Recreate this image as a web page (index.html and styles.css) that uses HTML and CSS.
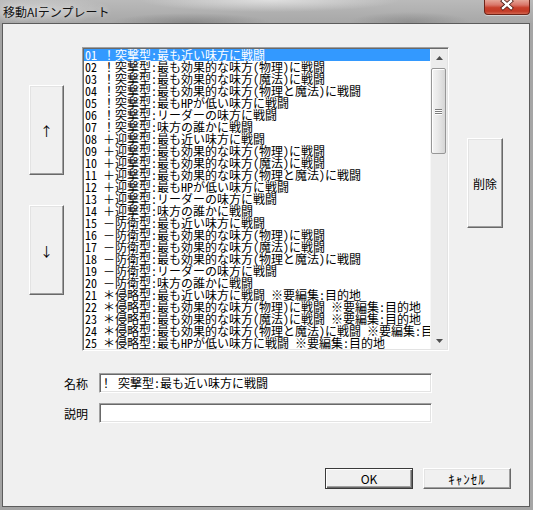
FILE: index.html
```html
<!DOCTYPE html>
<html lang="ja">
<head>
<meta charset="utf-8">
<title>移動AIテンプレート</title>
<link rel="stylesheet" href="styles.css">
</head>
<body>
<div class="window">
  <div class="titlebar">
    <span class="title">移動AIテンプレート</span>
    <div class="close">
      <svg width="46" height="15" viewBox="0 0 46 15">
        <path d="M19 2 L27 9 M27 2 L19 9" stroke="#4a1a12" stroke-width="4" stroke-linecap="square"/>
        <path d="M19 2 L27 9 M27 2 L19 9" stroke="#ffffff" stroke-width="2.4" stroke-linecap="square"/>
      </svg>
    </div>
  </div>
  <div class="client">
    <div class="top">
      <div class="move-col">
        <div class="btn move">↑</div>
        <div class="btn move">↓</div>
      </div>
      <div class="listbox">
        <div class="items">
          <div class="row sel">01 ！突撃型:最も近い味方に戦闘</div>
          <div class="row">02 ！突撃型:最も効果的な味方(物理)に戦闘</div>
          <div class="row">03 ！突撃型:最も効果的な味方(魔法)に戦闘</div>
          <div class="row">04 ！突撃型:最も効果的な味方(物理と魔法)に戦闘</div>
          <div class="row">05 ！突撃型:最もHPが低い味方に戦闘</div>
          <div class="row">06 ！突撃型:リーダーの味方に戦闘</div>
          <div class="row">07 ！突撃型:味方の誰かに戦闘</div>
          <div class="row">08 ＋迎撃型:最も近い味方に戦闘</div>
          <div class="row">09 ＋迎撃型:最も効果的な味方(物理)に戦闘</div>
          <div class="row">10 ＋迎撃型:最も効果的な味方(魔法)に戦闘</div>
          <div class="row">11 ＋迎撃型:最も効果的な味方(物理と魔法)に戦闘</div>
          <div class="row">12 ＋迎撃型:最もHPが低い味方に戦闘</div>
          <div class="row">13 ＋迎撃型:リーダーの味方に戦闘</div>
          <div class="row">14 ＋迎撃型:味方の誰かに戦闘</div>
          <div class="row">15 －防衛型:最も近い味方に戦闘</div>
          <div class="row">16 －防衛型:最も効果的な味方(物理)に戦闘</div>
          <div class="row">17 －防衛型:最も効果的な味方(魔法)に戦闘</div>
          <div class="row">18 －防衛型:最も効果的な味方(物理と魔法)に戦闘</div>
          <div class="row">19 －防衛型:リーダーの味方に戦闘</div>
          <div class="row">20 －防衛型:味方の誰かに戦闘</div>
          <div class="row">21 ＊侵略型:最も近い味方に戦闘 ※要編集:目的地</div>
          <div class="row">22 ＊侵略型:最も効果的な味方(物理)に戦闘 ※要編集:目的地</div>
          <div class="row">23 ＊侵略型:最も効果的な味方(魔法)に戦闘 ※要編集:目的地</div>
          <div class="row">24 ＊侵略型:最も効果的な味方(物理と魔法)に戦闘 ※要編集:目的地</div>
          <div class="row">25 ＊侵略型:最もHPが低い味方に戦闘 ※要編集:目的地</div>
        </div>
        <div class="scrollbar">
          <div class="sb-btn">
            <svg width="7" height="4" viewBox="0 0 7 4"><polygon points="0,4 3.5,0 7,4" fill="#4f4f4f"/></svg>
          </div>
          <div class="sb-track">
            <div class="thumb"><span class="grip"></span><span class="grip"></span><span class="grip"></span></div>
          </div>
          <div class="sb-btn">
            <svg width="7" height="4" viewBox="0 0 7 4"><polygon points="0,0 7,0 3.5,4" fill="#4f4f4f"/></svg>
          </div>
        </div>
      </div>
      <div class="btn delete">削除</div>
    </div>
    <div class="form">
      <div class="field"><span class="label">名称</span><div class="edit">！ 突撃型:最も近い味方に戦闘</div></div>
      <div class="field"><span class="label">説明</span><div class="edit"></div></div>
    </div>
    <div class="footer">
      <div class="btn default">OK</div>
      <div class="btn cancel">ｷｬﾝｾﾙ</div>
    </div>
  </div>
</div>
</body>
</html>
```
FILE: styles.css
```css
* { box-sizing: border-box; }
html, body { margin: 0; padding: 0; }
body {
  width: 533px;
  height: 510px;
  overflow: hidden;
  font-family: "Noto Sans CJK JP", sans-serif;
  font-size: 12px;
  color: #000;
}
.window {
  width: 533px;
  height: 510px;
  display: flex;
  flex-direction: column;
  background: linear-gradient(90deg, #a3a3a3, #ababab 50%, #a5a5a5);
}
.titlebar {
  height: 23px;
  flex: none;
  display: flex;
  justify-content: space-between;
  align-items: flex-start;
  padding: 0 3px 0 3px;
  background:
    radial-gradient(ellipse 130px 12px at 270px 0px, rgba(235,235,235,.75), rgba(235,235,235,0)),
    radial-gradient(ellipse 80px 10px at 190px 23px, rgba(80,80,80,.35), rgba(80,80,80,0)),
    radial-gradient(ellipse 60px 10px at 410px 22px, rgba(90,90,90,.3), rgba(90,90,90,0)),
    radial-gradient(ellipse 70px 14px at 40px 10px, rgba(230,230,230,.5), rgba(230,230,230,0)),
    linear-gradient(180deg, #bababa, #a7a7a7);
}
.title {
  line-height: 23px;
  font-size: 12px;
  color: #111;
  text-shadow: 0 0 6px rgba(255,255,255,.7);
}
.close {
  width: 46px;
  height: 15px;
  border: 1px solid #6e2418;
  border-top: none;
  border-radius: 0 0 4px 4px;
  background: linear-gradient(180deg, #e6a597 0%, #d9776a 35%, #c8402c 55%, #c23b26 80%, #d2654f 100%);
  box-shadow: 0 1px 0 rgba(255,255,255,.45);
  overflow: hidden;
}
.close svg { display: block; margin: -1px 0 0 -1px; }
.client {
  flex: 1;
  margin: 0 3px 3px 2px;
  border: 1px solid #5c5c5c;
  background: #f0f0f0;
  display: flex;
  flex-direction: column;
}
.top {
  display: flex;
  align-items: flex-start;
  margin-top: 23px;
}
.move-col {
  width: 35px;
  margin: 38px 0 0 26px;
  display: flex;
  flex-direction: column;
  gap: 30px;
}
.btn {
  background: #f0f0f0;
  border: 1px solid;
  border-color: #ffffff #696969 #696969 #ffffff;
  box-shadow: inset -1px -1px 0 #a0a0a0, inset 1px 1px 0 #e3e3e3;
  display: flex;
  align-items: center;
  justify-content: center;
  font-size: 12px;
  color: #000;
}
.btn.move { height: 90px; font-size: 13px; }
.btn.delete {
  width: 36px;
  height: 90px;
  margin: 91px 0 0 18px;
}
.listbox {
  width: 367px;
  height: 304px;
  margin-left: 18px;
  display: flex;
  border: 1px solid;
  border-color: #a0a0a0 #ffffff #ffffff #a0a0a0;
  box-shadow: inset 1px 1px 0 #696969, inset -1px -1px 0 #e3e3e3;
  padding: 1px;
  background: #fff;
}
.items {
  flex: 1;
  overflow: hidden;
  font-family: "Noto Sans Mono CJK JP", "Noto Sans CJK JP", monospace;
  font-size: 12px;
  line-height: 12px;
}
.row {
  height: 12px;
  white-space: pre;
  padding-left: 1px;
}
.row.sel { background: #3399ff; color: #fff; }
.scrollbar {
  width: 17px;
  flex: none;
  display: flex;
  flex-direction: column;
  background: #ececec;
  border-left: 1px solid #f7f7f7;
}
.sb-btn {
  height: 17px;
  flex: none;
  display: flex;
  align-items: center;
  justify-content: center;
}
.sb-track {
  flex: 1;
  padding-top: 2px;
}
.thumb {
  width: 15px;
  height: 86px;
  border: 1px solid #979797;
  border-radius: 2px;
  background: linear-gradient(90deg, #f4f4f4 0%, #e9e9e9 45%, #d6d6d6 100%);
  box-shadow: inset 1px 1px 0 #ffffff;
  display: flex;
  flex-direction: column;
  align-items: center;
  justify-content: center;
  gap: 1px;
}
.grip {
  width: 7px;
  height: 1px;
  background: #7c7c7c;
  box-shadow: 0 1px 0 #ffffff;
}
.form {
  margin: 22px 0 0 61px;
  display: flex;
  flex-direction: column;
  gap: 10px;
}
.field {
  display: flex;
  align-items: center;
  gap: 11px;
  height: 20px;
}
.label {
  width: 24px;
  font-size: 12px;
  white-space: nowrap;
}
.edit {
  width: 333px;
  height: 20px;
  background: #fff;
  border: 1px solid;
  border-color: #a0a0a0 #ffffff #ffffff #a0a0a0;
  box-shadow: inset 1px 1px 0 #696969, inset -1px -1px 0 #e3e3e3;
  font-family: "Noto Sans Mono CJK JP", "Noto Sans CJK JP", monospace;
  font-size: 12px;
  line-height: 18px;
  white-space: pre;
  padding-left: 0;
  overflow: hidden;
}
.footer {
  margin: 45px 18px 0 0;
  display: flex;
  justify-content: flex-end;
  gap: 10px;
}
.footer .btn { width: 88px; height: 21px; }
.btn.default {
  border: 1px solid #3a3a3a;
  box-shadow: inset 1px 1px 0 #ffffff, inset -1px -1px 0 #696969, inset -2px -2px 0 #a0a0a0;
}
.btn.cancel { font-size: 13px; letter-spacing: 1px; }
```
